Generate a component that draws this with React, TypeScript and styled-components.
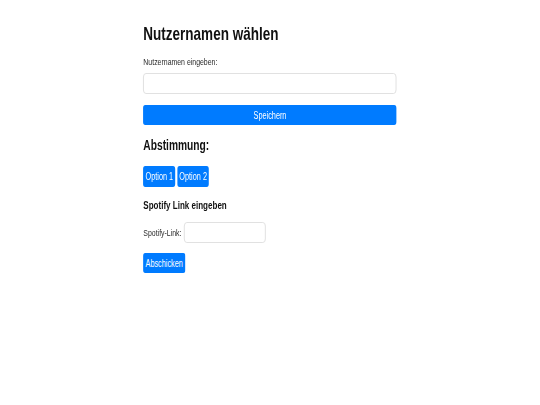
import { useState } from "react";
import styled, { createGlobalStyle } from "styled-components";

// the screenshot is horizontally squeezed, so the page is drawn wider and scaled back
const SQUEEZE = 0.73;

const GlobalStyle = createGlobalStyle`
  html, body {
    margin: 0;
    padding: 0;
    background: #fff;
    overflow: hidden;
  }
  body {
    font-family: "Liberation Sans", Arial, sans-serif;
    color: #222;
  }
`;

const Page = styled.div`
  width: ${540 / SQUEEZE}px;
  height: 405px;
  padding-top: 23px;
  box-sizing: border-box;
  transform: scaleX(${SQUEEZE});
  transform-origin: 0 0;
`;

const Container = styled.div`
  width: 347px;
  margin: 0 auto;
  display: flex;
  flex-direction: column;
  align-items: flex-start;
`;

const Title = styled.h1`
  margin: 0;
  font-size: 18.5px;
  line-height: 22px;
  font-weight: 700;
  color: #111;
`;

const SubTitle = styled.h2<{ small?: boolean }>`
  margin: ${(p) => (p.small ? "11px 0 0" : "12px 0 0")};
  font-size: ${(p) => (p.small ? "11px" : "14px")};
  line-height: ${(p) => (p.small ? "14px" : "17px")};
  font-weight: 700;
  color: #111;
`;

const Label = styled.label`
  margin-top: 11px;
  font-size: 9.5px;
  line-height: 12px;
  color: #2a2a2a;
`;

const TextInput = styled.input<{ full?: boolean }>`
  box-sizing: border-box;
  width: ${(p) => (p.full ? "100%" : "112px")};
  height: 21px;
  margin: ${(p) => (p.full ? "5px 0 0" : "0")};
  padding: 0 6px;
  border: 1px solid #dcdcdc;
  border-radius: 4px;
  font-family: inherit;
  font-size: 9.5px;
  outline: none;
  background: #fff;
`;

const Button = styled.button<{ full?: boolean; top?: number; tall?: boolean }>`
  box-sizing: border-box;
  height: ${(p) => (p.tall ? "21px" : "20px")};
  width: ${(p) => (p.full ? "100%" : "auto")};
  margin-top: ${(p) => p.top ?? 0}px;
  padding: 0 3px;
  border: none;
  border-radius: 3px;
  background: #007bff;
  color: #fff;
  font-family: inherit;
  font-size: 10px;
  cursor: pointer;
`;

const OptionRow = styled.div`
  display: flex;
  gap: 2.5px;
  margin-top: 12px;
`;

const LinkRow = styled.div`
  display: flex;
  align-items: center;
  gap: 3px;
  margin-top: 10px;
`;

const InlineLabel = styled.span`
  font-size: 9.5px;
  color: #2a2a2a;
`;

export default function App() {
  const [name, setName] = useState("");
  const [link, setLink] = useState("");

  return (
    <>
      <GlobalStyle />
      <Page>
        <Container>
          <Title>Nutzernamen wählen</Title>
          <Label htmlFor="username">Nutzernamen eingeben:</Label>
          <TextInput
            id="username"
            full
            value={name}
            onChange={(e) => setName(e.target.value)}
          />
          <Button full top={11}>
            Speichern
          </Button>

          <SubTitle>Abstimmung:</SubTitle>
          <OptionRow>
            <Button tall>Option 1</Button>
            <Button tall>Option 2</Button>
          </OptionRow>

          <SubTitle small>Spotify Link eingeben</SubTitle>
          <LinkRow>
            <InlineLabel>Spotify-Link:</InlineLabel>
            <TextInput value={link} onChange={(e) => setLink(e.target.value)} />
          </LinkRow>
          <Button top={10}>Abschicken</Button>
        </Container>
      </Page>
    </>
  );
}
